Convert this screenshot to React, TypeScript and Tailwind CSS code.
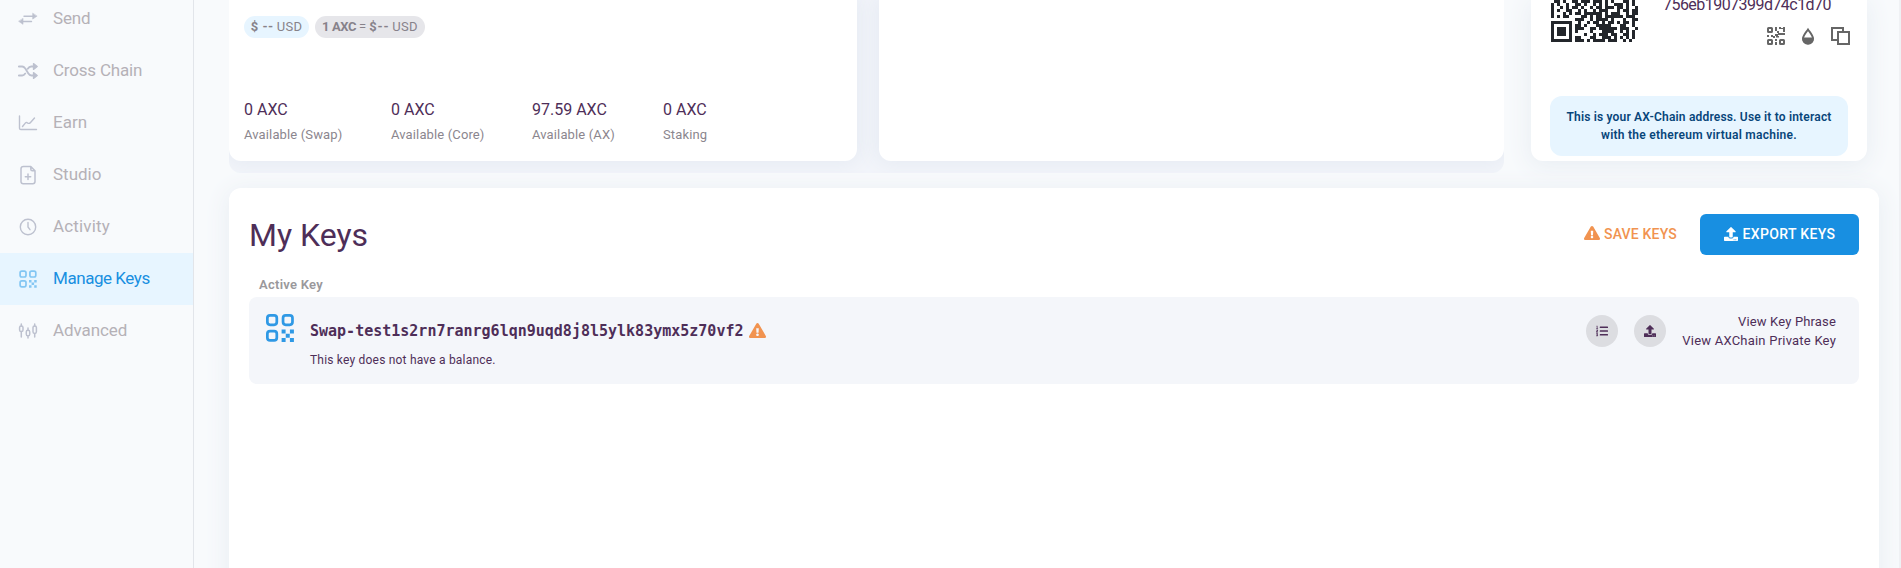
import type { ReactNode } from 'react';
import { FaExclamationTriangle, FaListOl, FaUpload } from 'react-icons/fa';

const QR_ROWS = [
  '.##.#..##.###.###.#.#...##.#.',
  '#.#..#..##.#..#.#.#..###.#.#.',
  '#..#.#.##.#..#.##.###.##.#..#',
  '#.#..##..#.#..#.###...#.##.##',
  '#...#.#.##.######.#.###..#.##',
  '#.#.##....##.#.##.######.###.',
  '........###..#.####.#...#..##',
  '#######..#..#.##.#.##.#.##.#.',
  '#.....#.##.#...#####...##..#.',
  '#.###.#.###..##.######.###..#',
  '#.###.#.#....#...####..#.#.#.',
  '#.###.#....#..#.###.##..##.#.',
  '#.....#.##...##..###.#.#.#.#.',
  '#######.###.#.####.###..#.#..',
];

const navIcon = {
  width: 20,
  height: 20,
  viewBox: '0 0 20 20',
  fill: 'none',
  stroke: 'currentColor',
  strokeWidth: 1.4,
  strokeLinecap: 'round' as const,
  strokeLinejoin: 'round' as const,
};

function SendIcon() {
  return (
    <svg {...navIcon}>
      <path d="M6 7.3h9M4.500 12.500h9" />
      <path d="M14.700 4.500v5.600L18.800 7.300zM5 9.700v5.600L.9 12.500z" fill="currentColor" strokeWidth="0.6" />
    </svg>
  );
}

function ShuffleIcon() {
  return (
    <svg {...navIcon} strokeWidth={1.8}>
      <path d="M.8 5.500h3.400c1.500 0 2.200.8 3.100 2l2.900 4.800c.9 1.500 1.700 2.200 3.200 2.200h2M.8 14.500h3.400c1.500 0 2.200-.7 3-1.900M9.800 7.700c.9-1.500 1.900-2.200 3.400-2.200h2.200" />
      <path d="M15.500 2.600v5.800l3.700-2.900zM15.500 11.600v5.800l3.700-2.900z" fill="currentColor" strokeWidth="1.300" />
    </svg>
  );
}

function ChartIcon() {
  return (
    <svg {...navIcon}>
      <path d="M1.500 3v12.200c0 .9.5 1.300 1.400 1.300h15.600M4.500 13.500l3-3.600c.5-.6 1-.6 1.700-.2 1.100.8 2.200 1 3.100 0L16.500 5" />
    </svg>
  );
}

function FilePlusIcon() {
  return (
    <svg {...navIcon} strokeWidth={1.500}>
      <path d="M5.500 1.500h7.300L17 5.700v10.800c0 1.400-.8 2.200-2.200 2.200H5.200c-1.400 0-2.200-.8-2.200-2.200V3.700c0-1.400.9-2.200 2.500-2.200zM12.800 1.700v2.600c0 1 .6 1.500 1.500 1.500H17M7.300 11.700h5.400M10 9v5.400" />
    </svg>
  );
}

function ClockIcon() {
  return (
    <svg {...navIcon}>
      <circle cx="10" cy="10" r="7.700" />
      <path d="M10 5.500V10l2 2.700" />
    </svg>
  );
}

function KeysIcon({ size = 20 }: { size?: number }) {
  return (
    <svg width={size} height={size} viewBox="0 0 20 20" fill="none" stroke="currentColor" strokeWidth="1.700">
      <rect x="2.100" y="2.100" width="5.900" height="5.900" rx="1.700" />
      <rect x="11.900" y="2.100" width="5.900" height="5.900" rx="1.700" />
      <rect x="2.100" y="11.900" width="5.900" height="5.900" rx="1.700" />
      <path
        d="M11 11h2.500v2.500H11zM16.200 11h2.500v2.500h-2.500zM13.600 13.600h2.500v2.500h-2.500zM11 16.200h2.500v2.500H11zM16.200 16.200h2.500v2.500h-2.500z"
        fill="currentColor"
        stroke="none"
      />
    </svg>
  );
}

function CandlesIcon() {
  return (
    <svg {...navIcon} strokeWidth={1.500}>
      <rect x="1.600" y="5" width="3.400" height="5.600" rx="1.600" />
      <rect x="8.300" y="9.200" width="3.400" height="5.600" rx="1.600" />
      <rect x="15" y="5" width="3.400" height="7.400" rx="1.600" />
      <path d="M3.300 3v2M3.300 10.600V16M10 7v2.200M10 14.800V17M16.700 3v2M16.700 12.400V16" />
    </svg>
  );
}

function QrCode() {
  return (
    <svg width="87" height="42" viewBox="0 0 29 14" shapeRendering="crispEdges" fill="#23262b">
      {QR_ROWS.flatMap((row, y) =>
        [...row].map((cell, x) => (cell === '#' ? <rect key={`${x}-${y}`} x={x} y={y} width="1" height="1" /> : null)),
      )}
    </svg>
  );
}

function SmallQrIcon() {
  return (
    <svg width="18" height="18" viewBox="0 0 18 18" fill="currentColor">
      <g fill="none" stroke="currentColor" strokeWidth="2">
        <rect x="1" y="1" width="4" height="4" rx="0.500" />
        <rect x="1" y="13" width="4" height="4" rx="0.500" />
        <rect x="13" y="13" width="4" height="4" rx="0.500" />
      </g>
      <path d="M8 0h2v4H8zM12 0h2v2h-2zM14 2h4V0h-2v1h-2zM16 2h2v3h-2zM10 4h2v2h-2zM0 8h2v2H0zM4 8h2v2H4zM6 9h2v2H6zM8 7h3v2H8zM11 6h3v2h-3zM14 6h4v2h-4zM9 9h3v1.500H9zM8 12h2v2H8zM8 15h2v3H8z" />
    </svg>
  );
}

function DropIcon() {
  return (
    <svg width="12" height="18" viewBox="0 0 12 18">
      <path d="M6 2.500C4 5.500 1 8.500 1 11.700a5 5 0 0 0 10 0C11 8.500 8 5.500 6 2.500z" fill="none" stroke="currentColor" strokeWidth="1.900" />
      <path d="M.5 10.500h11c.8 4-2 6.800-5.500 6.800S-.3 14.500.5 10.500z" fill="currentColor" />
    </svg>
  );
}

function CopyIcon() {
  return (
    <svg width="19" height="18" viewBox="0 0 19 18" fill="none" stroke="currentColor" strokeWidth="2">
      <path d="M6 13H1V1h11v3" />
      <path d="M7 5h11v12H7z" />
    </svg>
  );
}

const NAV: { label: string; icon: ReactNode; spacing: string; active?: boolean }[] = [
  { label: 'Send', icon: <SendIcon />, spacing: 'tracking-[-0.2px]' },
  { label: 'Cross Chain', icon: <ShuffleIcon />, spacing: 'tracking-[-0.2px]' },
  { label: 'Earn', icon: <ChartIcon />, spacing: 'tracking-normal' },
  { label: 'Studio', icon: <FilePlusIcon />, spacing: 'tracking-normal' },
  { label: 'Activity', icon: <ClockIcon />, spacing: 'tracking-[0.15px]' },
  { label: 'Manage Keys', icon: <KeysIcon />, spacing: 'tracking-[-0.45px]', active: true },
  { label: 'Advanced', icon: <CandlesIcon />, spacing: 'tracking-[-0.1px]' },
];

const BALANCES = [
  { value: '0 AXC', label: 'Available (Swap)', width: 'w-[147px]' },
  { value: '0 AXC', label: 'Available (Core)', width: 'w-[141px]' },
  { value: '97.59 AXC', label: 'Available (AX)', width: 'w-[131px]' },
  { value: '0 AXC', label: 'Staking', width: 'w-[100px]' },
];

function Sidebar() {
  return (
    <nav className="h-[568px] w-[194px] shrink-0 overflow-hidden border-r border-[#e2e5ea]">
      <ul className="-mt-[7px]">
        {NAV.map(({ label, icon, spacing, active }) => (
          <li key={label} className={`flex h-[52px] items-center gap-[15px] pl-[18px] ${active ? 'bg-[#e7f5ff]' : ''}`}>
            <span className={active ? 'text-[#83c6f3]' : 'text-[#bdc1cf]'}>{icon}</span>
            <span className={`pb-[2px] text-[17px] leading-5 whitespace-nowrap ${spacing} ${active ? 'text-[#188fe1]' : 'text-[#b5b1b7]'}`}>
              {label}
            </span>
          </li>
        ))}
      </ul>
    </nav>
  );
}

function BalanceCard() {
  return (
    <section className="h-[161px] w-[628px] shrink-0 rounded-b-xl bg-white pt-4 pl-[15px] shadow-[0_0_20px_4px_#e6ebf3]">
      <div className="flex gap-[6px] text-[13px] leading-[22px] text-[#87828a]">
        <p className="flex h-[22px] w-[65px] items-center justify-center gap-[3px] rounded-full bg-[#e7f5ff] whitespace-nowrap">
          <b className="tracking-[0.5px]">$ --</b>
          <span className="tracking-[0.3px]">USD</span>
        </p>
        <p className="flex h-[22px] w-[110px] items-center justify-center gap-[3px] rounded-full bg-[#e6e6ea] whitespace-nowrap">
          <b className="tracking-[-0.4px]">1 AXC</b>
          <span>=</span>
          <b className="tracking-[0.8px]">$--</b>
          <span className="tracking-[0.3px]">USD</span>
        </p>
      </div>
      <dl className="mt-[61px] flex">
        {BALANCES.map(({ value, label, width }) => (
          <div key={label} className={`flex flex-col gap-1 ${width}`}>
            <dd className="text-[16px] leading-[22px] text-[#4e2e58]">{value}</dd>
            <dt className="text-[13px] leading-5 tracking-[0.13px] text-[#8b868e]">{label}</dt>
          </div>
        ))}
      </dl>
    </section>
  );
}

function AddressCard() {
  return (
    <section className="h-[161px] w-[336px] shrink-0 rounded-b-xl bg-white pl-[19px] shadow-[0_4px_24px_2px_#e9eef3]">
      <div className="flex h-24 pl-px">
        <QrCode />
        <div className="-mt-[6px] ml-[25px] w-[187px]">
          <p className="text-[16px] leading-[22px] tracking-[-0.54px] text-[#4e2e58]">756eb1907399d74c1d70</p>
          <div className="mt-[11px] flex justify-end gap-[17px] text-[#666]">
            <SmallQrIcon />
            <DropIcon />
            <CopyIcon />
          </div>
        </div>
      </div>
      <p className="h-[60px] w-[298px] rounded-xl bg-[#e7f5ff] pt-3 text-center text-[12px] leading-[18px] font-semibold tracking-[0.18px] text-[#08457a]">
        This is your AX-Chain address. Use it to interact
        <br />
        <span className="tracking-[0.27px]">with the ethereum virtual machine.</span>
      </p>
    </section>
  );
}

function KeysCard() {
  return (
    <section className="h-[420px] w-[1650px] shrink-0 rounded-xl bg-white px-5 pt-[26px] shadow-[0_4px_24px_2px_#e9eef3]">
      <header className="flex h-[41px] items-center justify-between">
        <h1 className="text-[32px] leading-10 text-[#4e2e58]">My Keys</h1>
        <div className="flex items-center text-[14px] font-medium">
          <button className="mr-[23px] flex items-center gap-1 tracking-[0.19px] text-[#f19350]">
            <FaExclamationTriangle className="mb-[3px] size-4" />
            SAVE KEYS
          </button>
          <button className="flex h-[41px] w-[159px] items-center justify-center gap-[5px] rounded-md bg-[#188fe1] tracking-[0.35px] text-white">
            <FaUpload className="mb-[2px] size-[14px]" />
            EXPORT KEYS
          </button>
        </div>
      </header>
      <h2 className="mt-[20px] pl-[10px] text-[13px] leading-[19px] font-semibold tracking-[0.27px] text-[#9a989b]">Active Key</h2>
      <div className="mt-[3px] flex h-[87px] rounded-lg bg-[#f4f6fa] pt-4">
        <span className="-mt-px ml-[15px] w-[46px] text-[#2f99e5]">
          <KeysIcon size={32} />
        </span>
        <div className="pt-[5px] text-[#4e2e58]">
          <div className="flex items-center gap-[6px]">
            <code className="font-['DejaVu_Sans_Mono',monospace] text-[15px] leading-[26px] font-bold">
              Swap-test1s2rn7ranrg6lqn9uqd8j8l5ylk83ymx5z70vf2
            </code>
            <FaExclamationTriangle className="mb-[2px] size-[17px] text-[#f19350]" />
          </div>
          <p className="mt-[7px] text-[12px] leading-[18px] tracking-[0.2px]">This key does not have a balance.</p>
        </div>
        <div className="ml-auto flex gap-4 pt-[2px] pr-[23px] text-[#4e2e58]">
          <button className="flex size-8 items-center justify-center rounded-full bg-[#dcdde1]">
            <FaListOl className="size-3" />
          </button>
          <button className="flex size-8 items-center justify-center rounded-full bg-[#dcdde1]">
            <FaUpload className="size-3" />
          </button>
          <div className="-mt-[3px] text-right text-[13px] leading-[19px] whitespace-nowrap">
            <p className="tracking-[0.15px]">View Key Phrase</p>
            <p className="tracking-[0.22px]">View AXChain Private Key</p>
          </div>
        </div>
      </div>
    </section>
  );
}

export default function App() {
  return (
    <div className="flex h-[568px] w-[1901px] overflow-hidden border-r-2 border-[#eff1f4] bg-[#f8fafc] font-[Roboto,sans-serif]">
      <Sidebar />
      <main className="flex flex-col pl-[35px]">
        <div className="flex h-[188px] shrink-0 gap-[27px]">
          <div className="flex h-[173px] w-[1275px] shrink-0 gap-[22px] overflow-hidden rounded-b-xl bg-[#f3f5fa]">
            <BalanceCard />
            <section className="h-[161px] w-[625px] shrink-0 rounded-b-xl bg-white shadow-[0_0_20px_4px_#e6ebf3]" />
          </div>
          <AddressCard />
        </div>
        <KeysCard />
      </main>
    </div>
  );
}
